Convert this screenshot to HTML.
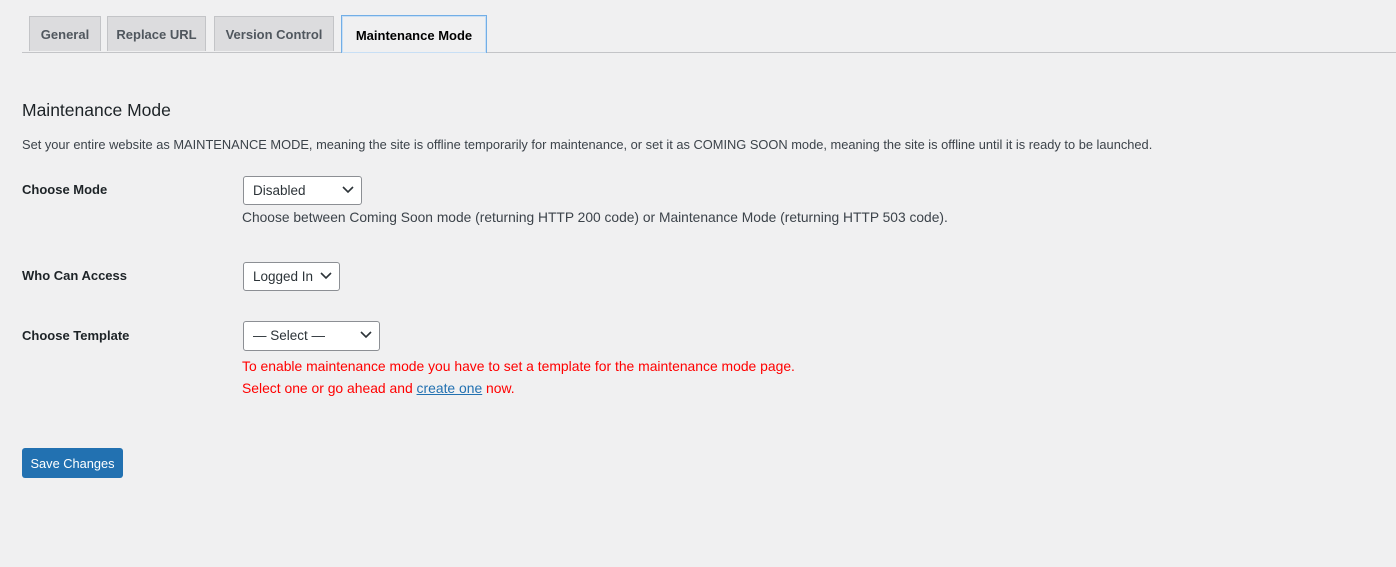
<!DOCTYPE html>
<html><head><style>
body{margin:0;background:#f0f0f1;font-family:"Liberation Sans",sans-serif;color:#3c434a;font-size:13px;width:1396px;height:567px;position:relative;overflow:hidden}
.a{position:absolute;white-space:nowrap}
.tab{position:absolute;top:16px;height:35px;border:1px solid #c3c4c7;border-bottom:none;background:#dcdcde;color:#50575e;font-weight:bold;font-size:13px;line-height:36px;text-align:center;box-sizing:border-box}
.sel{position:absolute;left:243px;border:1px solid #8c8f94;border-radius:3px;background:#fff;box-sizing:border-box;color:#2c3338;font-size:13.5px;line-height:27px;padding-left:9px}
.sel svg{position:absolute;right:7px;top:9px}
.lab{left:22px;font-weight:bold;color:#1d2327;font-size:13px}
</style></head><body>
<div class="a" style="left:22px;top:52px;width:1374px;height:1px;background:#c3c4c7"></div>
<div class="tab" style="left:29px;width:72px">General</div>
<div class="tab" style="left:107px;width:99px">Replace URL</div>
<div class="tab" style="left:214px;width:120px">Version Control</div>
<div class="tab" style="left:341px;top:15px;height:38px;line-height:39px;width:146px;background:#f0f0f1;color:#000;border:1px solid #72aee6;border-bottom:none;box-shadow:0 0 0 1px #c8dff5 inset">Maintenance Mode</div>
<div class="a" style="left:22px;top:100px;font-size:17.5px;color:#1d2327">Maintenance Mode</div>
<div class="a" style="left:22px;top:137px;font-size:12.85px;color:#3c434a">Set your entire website as MAINTENANCE MODE, meaning the site is offline temporarily for maintenance, or set it as COMING SOON mode, meaning the site is offline until it is ready to be launched.</div>
<div class="a lab" style="top:182px">Choose Mode</div>
<div class="sel" style="top:176px;width:119px;height:29px">Disabled<svg width="12" height="8"><path d="M1 1l5 5 5-5" stroke="#2c3338" stroke-width="1.6" fill="none"/></svg></div>
<div class="a" style="left:242px;top:210px;font-size:13.8px">Choose between Coming Soon mode (returning HTTP 200 code) or Maintenance Mode (returning HTTP 503 code).</div>
<div class="a lab" style="top:268px">Who Can Access</div>
<div class="sel" style="top:262px;width:97px;height:29px">Logged In<svg width="12" height="8"><path d="M1 1l5 5 5-5" stroke="#2c3338" stroke-width="1.6" fill="none"/></svg></div>
<div class="a lab" style="top:328px">Choose Template</div>
<div class="sel" style="top:321px;width:137px;height:30px">— Select —<svg width="12" height="8"><path d="M1 1l5 5 5-5" stroke="#2c3338" stroke-width="1.6" fill="none"/></svg></div>
<div class="a" style="left:242px;top:358px;font-size:13.9px;color:#f00">To enable maintenance mode you have to set a template for the maintenance mode page.</div>
<div class="a" style="left:242px;top:380px;font-size:13.9px;color:#f00">Select one or go ahead and <span style="color:#2271b1;text-decoration:underline">create one</span> now.</div>
<div class="a" style="left:22px;top:448px;width:101px;height:30px;background:#2271b1;border-radius:3px;color:#fff;font-size:12.8px;line-height:31px;text-align:center">Save Changes</div>
</body></html>
